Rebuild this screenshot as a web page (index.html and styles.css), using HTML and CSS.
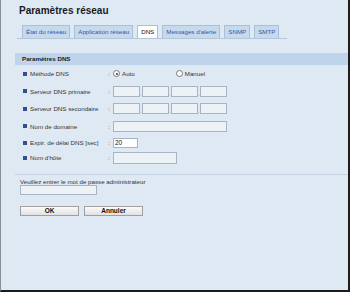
FILE: index.html
```html
<!DOCTYPE html>
<html lang="fr">
<head>
    <meta charset="UTF-8">
    <meta name="viewport" content="width=device-width, initial-scale=1.0">
    <title>Paramètres réseau</title>
    <link rel="stylesheet" href="styles.css">
</head>
<body>
    <div class="page">
        <h1>Paramètres réseau</h1>

        <div class="tabs">
            <span class="tab">État du réseau</span>
            <span class="tab">Application réseau</span>
            <span class="tab active">DNS</span>
            <span class="tab">Messages d'alerte</span>
            <span class="tab">SNMP</span>
            <span class="tab">SMTP</span>
        </div>

        <div class="section-head">Paramètres DNS</div>

        <div class="rows">
            <div class="row">
                <span class="label">Méthode DNS</span>
                <span class="colon">:</span>
                <label class="radio"><span class="dot checked"></span>Auto</label>
                <label class="radio radio-right"><span class="dot"></span>Manuel</label>
            </div>
            <div class="row">
                <span class="label">Serveur DNS primaire</span>
                <span class="colon">:</span>
                <div class="ip">
                    <input type="text"><span class="sep">.</span>
                    <input type="text"><span class="sep">.</span>
                    <input type="text"><span class="sep">.</span>
                    <input type="text">
                </div>
            </div>
            <div class="row">
                <span class="label">Serveur DNS secondaire</span>
                <span class="colon">:</span>
                <div class="ip">
                    <input type="text"><span class="sep">.</span>
                    <input type="text"><span class="sep">.</span>
                    <input type="text"><span class="sep">.</span>
                    <input type="text">
                </div>
            </div>
            <div class="row">
                <span class="label">Nom de domaine</span>
                <span class="colon">:</span>
                <input type="text" class="field-wide">
            </div>
            <div class="row row-short">
                <span class="label">Expir. de délai DNS [sec]</span>
                <span class="colon">:</span>
                <input type="text" class="field-small" value="20">
            </div>
            <div class="row row-short">
                <span class="label">Nom d'hôte</span>
                <span class="colon">:</span>
                <input type="text" class="field-host">
            </div>
        </div>

        <hr class="divider">

        <div class="login">
            <p>Veuillez entrer le mot de passe administrateur</p>
            <input type="password" class="field-pass">
            <div class="buttons">
                <button>OK</button>
                <button>Annuler</button>
            </div>
        </div>
    </div>
</body>
</html>
```

FILE: styles.css
```css
/* Allgemeine Stile */
html, body {
    margin: 0;
    padding: 0;
}

body {
    width: 350px;
    height: 292px;
    box-sizing: border-box;
    background-color: #dfe9f4;
    border-left: 1px solid #8a8f96;
    border-right: 2px solid #1c1c1c;
    border-bottom: 2px solid #1c1c1c;
    font-family: "Liberation Sans", Arial, sans-serif;
    color: #222;
    overflow: hidden;
}

.page {
    padding-top: 5px;
}

h1 {
    margin: 0 0 0 18px;
    font-size: 10px;
    line-height: 12px;
    font-weight: bold;
    color: #1a1a1a;
}

/* Reiter */
.tabs {
    display: flex;
    gap: 4px;
    margin: 8px 0 0 16px;
    padding-left: 5px;
    width: 265px;
    border-bottom: 1px solid #b4c6da;
}

.tab {
    height: 13px;
    box-sizing: border-box;
    padding: 0 3px;
    border: 1px solid #a9c0d9;
    border-bottom: none;
    background-color: #c6daee;
    color: #3a52a8;
    font-size: 6.2px;
    line-height: 12px;
    white-space: nowrap;
}

.tab.active {
    background-color: #fff;
    color: #111;
    padding: 0 3px;
}

/* Abschnitt */
.section-head {
    margin: 14px 0 0 14px;
    height: 12px;
    padding-left: 7px;
    background-color: #bdd4eb;
    font-size: 6.2px;
    font-weight: bold;
    line-height: 12px;
    color: #222;
}

.rows {
    margin-left: 21px;
}

.row {
    display: flex;
    align-items: center;
    height: 17.5px;
    font-size: 6.2px;
}

.row-short {
    height: 15px;
}

.label {
    width: 78px;
    padding-left: 8px;
    position: relative;
    color: #333;
}

.label::before {
    content: "";
    position: absolute;
    left: 1px;
    top: 50%;
    margin-top: -2px;
    width: 4px;
    height: 4px;
    background-color: #32508c;
}

.colon {
    width: 5px;
    color: #333;
}

.radio {
    display: flex;
    align-items: center;
    gap: 2px;
    color: #333;
}

.radio-right {
    margin-left: 41px;
}

.dot {
    width: 5px;
    height: 5px;
    border: 1px solid #777;
    border-radius: 50%;
    background-color: #fff;
    position: relative;
}

.dot.checked::after {
    content: "";
    position: absolute;
    left: 1.5px;
    top: 1.5px;
    width: 2px;
    height: 2px;
    border-radius: 50%;
    background-color: #333;
}

input {
    box-sizing: border-box;
    height: 11px;
    margin: 0;
    padding: 0 1px;
    border: 1px solid #a6b4c4;
    background-color: #edf2f7;
    font-family: "Liberation Sans", Arial, sans-serif;
    font-size: 6.5px;
    color: #111;
}

.ip {
    display: flex;
    align-items: flex-end;
}

.ip input {
    width: 27px;
}

.sep {
    width: 2px;
    font-size: 5px;
    line-height: 5px;
    color: #777;
    text-align: center;
}

.field-wide {
    width: 114px;
}

.field-small {
    width: 25px;
    height: 10px;
    background-color: #fff;
}

.field-host {
    width: 64px;
    height: 12px;
}

.divider {
    margin: 9px 0 0 14px;
    border: none;
    border-top: 1px solid #c5d4e4;
}

.login {
    margin-left: 19px;
    font-size: 6.2px;
}

.login p {
    margin: 3px 0 0 0;
    color: #333;
}

.field-pass {
    width: 77px;
    height: 10px;
    margin-top: 0;
}

.buttons {
    display: flex;
    gap: 5px;
    margin-top: 11px;
}

button {
    width: 59px;
    height: 10px;
    padding: 0;
    border: 1px solid #a0a0a0;
    background: linear-gradient(#fafafa, #e2e2e2);
    font-family: "Liberation Sans", Arial, sans-serif;
    font-size: 6.5px;
    font-weight: bold;
    line-height: 8px;
    color: #111;
}
```
